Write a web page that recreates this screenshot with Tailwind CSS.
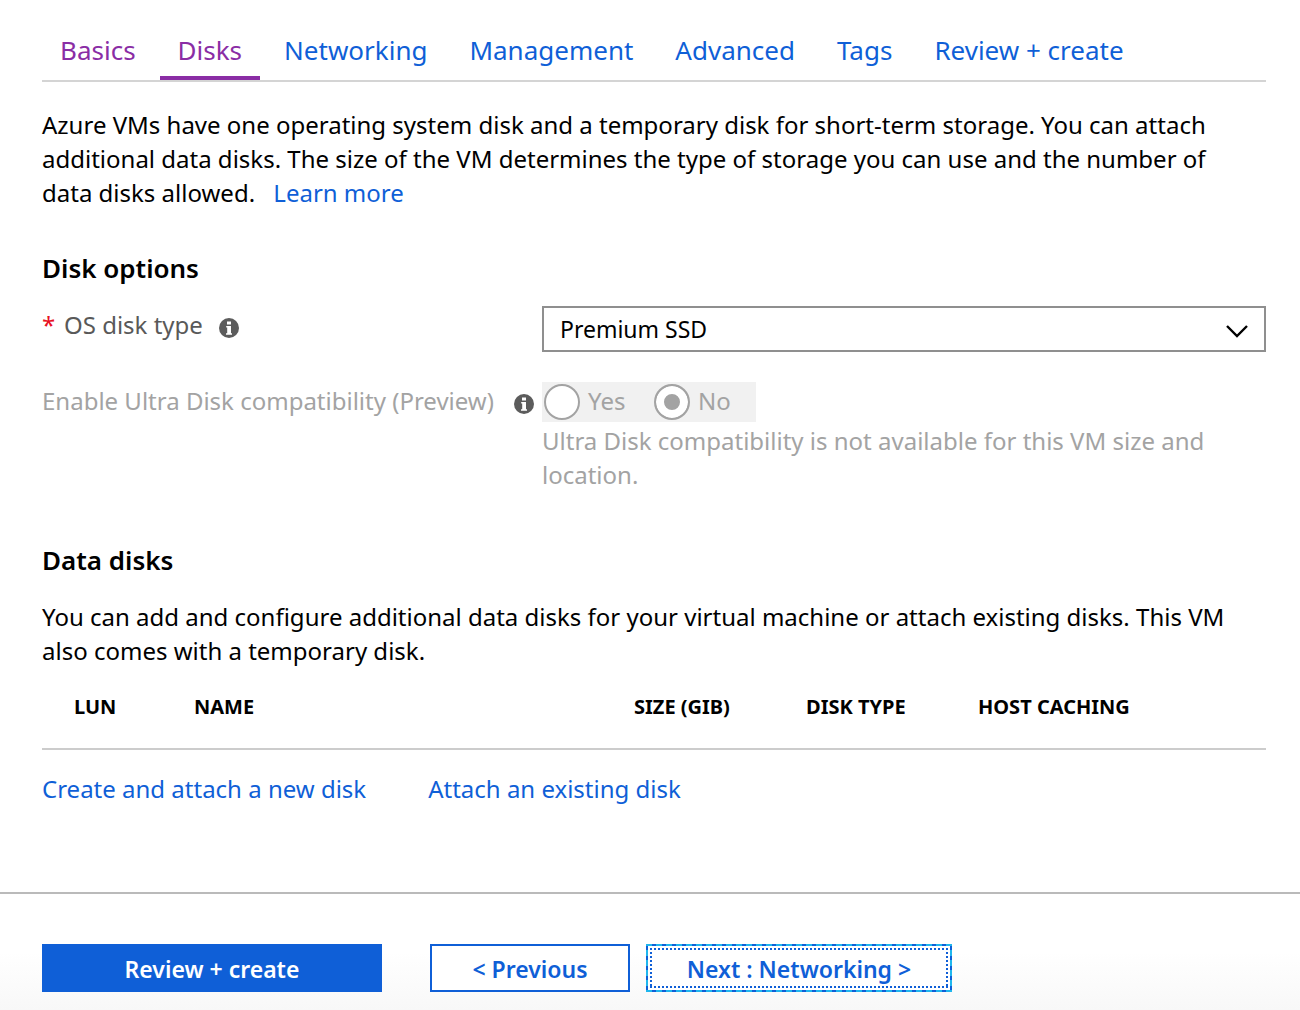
<!DOCTYPE html>
<html lang="en">
<head>
<meta charset="utf-8">
<meta name="viewport" content="width=device-width, initial-scale=1">
<title>Create a virtual machine - Disks</title>
<script src="https://cdn.jsdelivr.net/npm/@tailwindcss/browser@4"></script>
</head>
<body class="min-h-screen flex flex-col bg-white font-['Noto_Sans','Open_Sans',sans-serif] text-[24px] leading-[34px] text-black">
<main class="flex-1 pl-[42px] pr-[34px] pt-[33px]">
  <nav class="flex gap-[6px] border-b-2 border-[#d4d4d4] whitespace-nowrap text-[26px] text-[#0f5fd7]" aria-label="Steps">
    <a href="#" class="px-[18px] pb-[9px] border-b-4 border-transparent text-[#8a2da5]">Basics</a>
    <a href="#" aria-current="page" class="px-[18px] pb-[9px] border-b-4 border-[#8a2da5] text-[#8a2da5]">Disks</a>
    <a href="#" class="px-[18px]">Networking</a>
    <a href="#" class="px-[18px]">Management</a>
    <a href="#" class="px-[18px]">Advanced</a>
    <a href="#" class="px-[18px]">Tags</a>
    <a href="#" class="px-[18px]">Review + create</a>
  </nav>
  <p class="mt-[26px] pr-6">Azure VMs have one operating system disk and a temporary disk for short-term storage. You can attach additional data disks. The size of the VM determines the type of storage you can use and the number of data disks allowed. <a href="#" class="ml-3 inline-block text-[#0f5fd7]">Learn more</a></p>

  <h2 class="mt-[41px] text-[26px] font-semibold">Disk options</h2>
  <div class="mt-[21px] grid grid-cols-[500px_1fr]">
    <div class="flex items-center self-start pt-[2px] text-[#595959]">
      <span class="w-[22px] text-[#e81123]">*</span>
      <label for="os-disk">OS disk type</label>
      <svg class="ml-4 mt-[6px] size-5" viewBox="0 0 20 20" aria-hidden="true"><circle cx="10" cy="10" r="10" fill="#5c5c5c"/><path d="M8 3.500h4v3H8zM7.200 8H12v7.300h1v1.500H7v-1.500h1.200V9.500h-1z" fill="#fff"/></svg>
    </div>
    <div class="relative">
      <select id="os-disk" class="block w-full h-[46px] appearance-none rounded-none border-2 border-[#8f8f8f] bg-white pl-4 pr-14 text-[23px] text-black"><option>Premium SSD</option></select>
      <svg class="pointer-events-none absolute right-[17px] top-[17px] w-6 h-[15px]" viewBox="0 0 24 15" fill="none" stroke="#000" stroke-width="2.400" aria-hidden="true"><path d="M2 3l10 10L22 3"/></svg>
    </div>
  </div>
  <fieldset disabled class="mt-[30px] grid grid-cols-[500px_1fr] text-[#a3a3a3]">
    <div class="flex items-center justify-between self-start pt-[2px] pr-2 whitespace-nowrap">
      <span id="ultra">Enable Ultra Disk compatibility (Preview)</span>
      <svg class="mt-[6px] size-5" viewBox="0 0 20 20" aria-hidden="true"><circle cx="10" cy="10" r="10" fill="#5c5c5c"/><path d="M8 3.500h4v3H8zM7.200 8H12v7.300h1v1.500H7v-1.500h1.200V9.500h-1z" fill="#fff"/></svg>
    </div>
    <div>
      <div role="radiogroup" aria-labelledby="ultra" class="flex w-[214px] h-10 items-center bg-[#f1f1f1] pl-[2px]">
        <label class="flex w-[110px] items-center gap-2"><input type="radio" name="ultra" class="size-9 appearance-none rounded-full border-2 border-[#a3a3a3] bg-white"><span class="pb-[2px]">Yes</span></label>
        <label class="flex items-center gap-2"><input type="radio" name="ultra" checked class="size-9 appearance-none rounded-full border-2 border-[#a3a3a3] bg-[#a3a3a3] shadow-[inset_0_0_0_8px_white]"><span class="pb-[2px]">No</span></label>
      </div>
      <p class="mt-[2px]">Ultra Disk compatibility is not available for this VM size and location.</p>
    </div>
  </fieldset>

  <h2 class="mt-[51px] text-[26px] font-semibold">Data disks</h2>
  <p class="mt-[23px]">You can add and configure additional data disks for your virtual machine or attach existing disks. This VM also comes with a temporary disk.</p>
  <table class="w-full table-fixed border-b-2 border-[#cccccc] text-left text-[20px]">
    <thead><tr class="h-[81px] align-top">
      <th class="w-[152px] pl-8 pt-[22px] font-bold">LUN</th>
      <th class="w-[440px] pt-[22px] font-bold">NAME</th>
      <th class="w-[172px] pt-[22px] font-bold">SIZE (GIB)</th>
      <th class="w-[172px] pt-[22px] font-bold">DISK TYPE</th>
      <th class="pt-[22px] font-bold">HOST CACHING</th>
    </tr></thead>
  </table>
  <div class="mt-[22px] flex gap-[62px] text-[#0f5fd7]">
    <a href="#">Create and attach a new disk</a>
    <a href="#">Attach an existing disk</a>
  </div>
</main>
<footer class="mt-[85px] flex border-t-2 border-[#bababa] bg-linear-to-b from-white from-50% to-[#f8f8f8] px-[42px] pt-[50px] pb-[18px] text-[23px] font-semibold text-[#0f5fd7]">
  <button class="h-12 w-[340px] bg-[#0f5fd7] pt-[2px] text-white">Review + create</button>
  <button class="ml-12 h-12 w-[200px] border-2 border-[#0f5fd7] bg-white pt-[2px]">&lt; Previous</button>
  <button class="relative ml-4 h-12 w-[306px] bg-[#1fb6ee] pt-[2px]">
    <svg class="absolute inset-0 size-full" viewBox="0 0 306 48" fill="none" stroke="#0f5fd7" stroke-width="2" aria-hidden="true"><path fill="#fff" stroke="none" d="M2 2h302v44H2z"/><path stroke-dasharray="4 6" d="M6 1h299v46H1V1"/><path stroke-dasharray="2 2" d="M4 5h298M4 43h298M5 4v40M301 4v40"/></svg>
    <span class="relative">Next : Networking &gt;</span>
  </button>
</footer>
</body>
</html>
